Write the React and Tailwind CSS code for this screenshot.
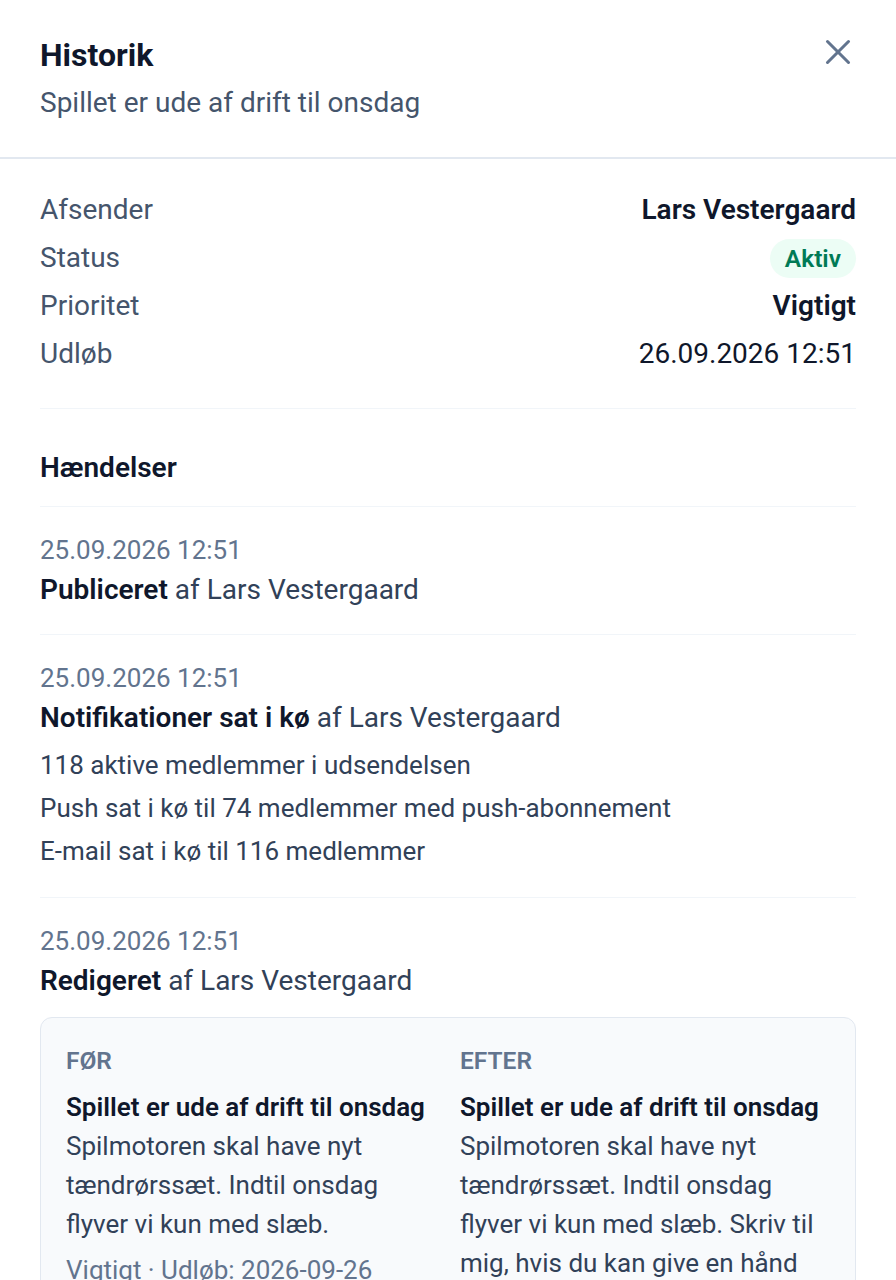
import { X } from "lucide-react";

const details = [
  { label: "Afsender", value: "Lars Vestergaard", bold: true },
  { label: "Status", badge: "Aktiv" },
  { label: "Prioritet", value: "Vigtigt", bold: true },
  { label: "Udløb", value: "26.09.2026 12:51" },
];

const events = [
  {
    date: "25.09.2026 12:51",
    action: "Publiceret",
    by: "Lars Vestergaard",
  },
  {
    date: "25.09.2026 12:51",
    action: "Notifikationer sat i kø",
    by: "Lars Vestergaard",
    lines: [
      "118 aktive medlemmer i udsendelsen",
      "Push sat i kø til 74 medlemmer med push-abonnement",
      "E-mail sat i kø til 116 medlemmer",
    ],
  },
  {
    date: "25.09.2026 12:51",
    action: "Redigeret",
    by: "Lars Vestergaard",
    diff: {
      before: {
        title: "Spillet er ude af drift til onsdag",
        body: "Spilmotoren skal have nyt tændrørssæt. Indtil onsdag flyver vi kun med slæb.",
        meta: "Vigtigt · Udløb: 2026-09-26",
      },
      after: {
        title: "Spillet er ude af drift til onsdag",
        body: "Spilmotoren skal have nyt tændrørssæt. Indtil onsdag flyver vi kun med slæb. Skriv til mig, hvis du kan give en hånd med.",
        meta: "Vigtigt · Udløb: 2026-09-26",
      },
    },
  },
];

const DiffColumn = ({ heading, item }) => (
  <div>
    <p className="text-[24.5px] leading-[30px] font-semibold uppercase text-slate-500">
      {heading}
    </p>
    <p className="mt-3 text-[26px] leading-[39px] font-semibold text-slate-900">
      {item.title}
    </p>
    <p className="text-[26px] leading-[39px] text-slate-700">{item.body}</p>
    <p className="mt-2 text-[26px] leading-9 text-slate-500">{item.meta}</p>
  </div>
);

export default function App() {
  return (
    <div className="min-h-screen bg-white font-['Roboto',sans-serif] text-slate-900">
      {/* Header */}
      <div className="flex items-start justify-between border-b-2 border-slate-200 px-10 pt-[37px] pb-9">
        <div>
          <h2 className="text-[32px] leading-9 font-bold text-slate-900">Historik</h2>
          <p className="mt-3 text-[28px] leading-9 text-slate-600">
            Spillet er ude af drift til onsdag
          </p>
        </div>
        <button className="mt-[-6px] mr-[-3px] text-slate-500">
          <X size={42} strokeWidth={1.75} />
        </button>
      </div>

      <div className="px-10 pt-[33px]">
        {/* Details */}
        <div className="flex flex-col gap-3 border-b border-slate-100 pb-9">
          {details.map((row) => (
            <div key={row.label} className="flex h-9 items-center justify-between text-[28px] leading-9">
              <span className="text-slate-600">{row.label}</span>
              {row.badge ? (
                <span className="rounded-full bg-emerald-50 px-[15px] text-[24.5px] leading-[39px] font-semibold text-emerald-700">
                  {row.badge}
                </span>
              ) : (
                <span className={row.bold ? "font-semibold text-slate-900" : "text-slate-900"}>
                  {row.value}
                </span>
              )}
            </div>
          ))}
        </div>

        {/* Events */}
        <h3 className="border-b border-slate-100 pt-[41px] pb-5 text-[28px] leading-9 font-semibold text-slate-900">
          Hændelser
        </h3>
        {events.map((ev, i) => (
          <div key={i} className="border-b border-slate-100 pt-[25px] pb-[26px] last:border-b-0">
            <p className="text-[26px] leading-9 text-slate-500">{ev.date}</p>
            <p className="mt-1 text-[28px] leading-9 text-slate-700">
              <span className="font-semibold text-slate-900">{ev.action}</span> af {ev.by}
            </p>
            {ev.lines && (
              <div className="mt-2 -mb-[2px]">
                {ev.lines.map((line) => (
                  <p key={line} className="text-[26px] leading-[43px] text-slate-700">
                    {line}
                  </p>
                ))}
              </div>
            )}
            {ev.diff && (
              <div className="mt-[18px] grid grid-cols-2 gap-6 rounded-xl border border-slate-200 bg-slate-50 px-[25px] pt-[28px] pb-[25px]">
                <DiffColumn heading="Før" item={ev.diff.before} />
                <DiffColumn heading="Efter" item={ev.diff.after} />
              </div>
            )}
          </div>
        ))}
      </div>
    </div>
  );
}
